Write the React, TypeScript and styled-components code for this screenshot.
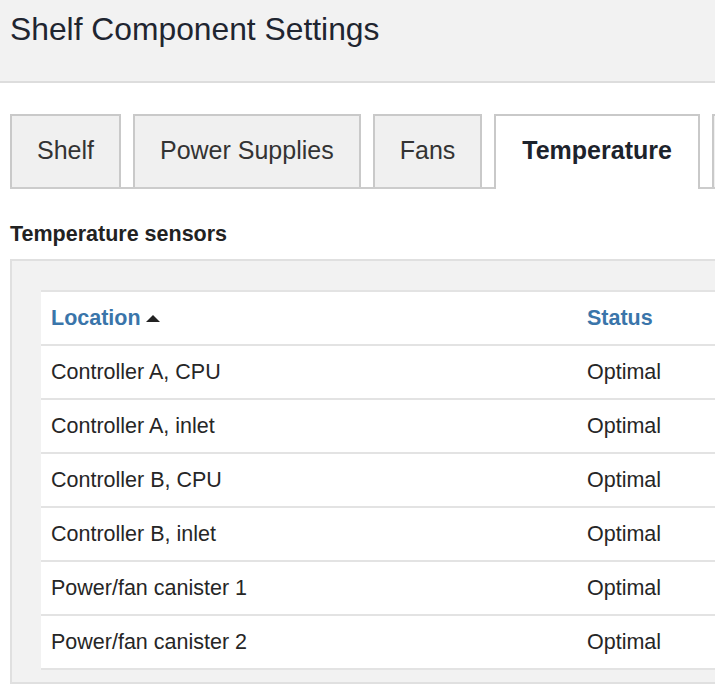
import React from "react";
import styled, { createGlobalStyle } from "styled-components";

const Global = createGlobalStyle`
  html, body {
    margin: 0;
    padding: 0;
    background: #ffffff;
    overflow: hidden;
  }
  body {
    font-family: "Liberation Sans", Arial, sans-serif;
    color: #222222;
  }
`;

const Page = styled.div`
  width: 715px;
  height: 689px;
  overflow: hidden;
`;

const Header = styled.header`
  height: 70px;
  padding: 11px 0 0 10px;
  background: #f2f2f2;
  border-bottom: 2px solid #dddddd;
`;

const Title = styled.h1`
  margin: 0;
  font-size: 31.8px;
  line-height: 36px;
  font-weight: normal;
  color: #1f2530;
  white-space: nowrap;
`;

const Body = styled.main`
  width: 920px;
  padding: 31px 0 0 10px;
`;

const TabList = styled.div`
  display: flex;
  gap: 12px;
  border-bottom: 2px solid #cccccc;
  height: 73px;
  white-space: nowrap;
`;

const Tab = styled.div<{ $active?: boolean }>`
  box-sizing: border-box;
  min-width: 60px;
  height: ${(p) => (p.$active ? "75px" : "73px")};
  padding: 0 ${(p) => (p.$active ? "26px" : "25px")};
  border: 2px solid #c9c9c9;
  border-bottom: none;
  background: ${(p) => (p.$active ? "#ffffff" : "#f0f0f0")};
  font-size: 25px;
  line-height: 69px;
  font-weight: ${(p) => (p.$active ? "bold" : "normal")};
  color: ${(p) => (p.$active ? "#1d232c" : "#333333")};
  flex: none;
`;

const SectionTitle = styled.h2`
  margin: 32px 0 12px 0;
  font-size: 21.5px;
  line-height: 26px;
  font-weight: bold;
  color: #222222;
`;

const Panel = styled.section`
  background: #f2f2f2;
  border: 2px solid #e0e0e0;
  border-right: none;
  padding: 29px 0 12px 29px;
`;

const Table = styled.div`
  background: #ffffff;
  border-top: 2px solid #e3e3e3;
`;

const Row = styled.div`
  display: grid;
  grid-template-columns: 536px 1fr;
  height: 52px;
  box-sizing: content-box;
  border-bottom: 2px solid #e3e3e3;
  align-items: center;
`;

const HeadCell = styled.div`
  padding-left: 10px;
  font-size: 21.5px;
  font-weight: bold;
  color: #3a75aa;
  display: flex;
  align-items: center;
  gap: 5px;
`;

const Cell = styled.div`
  padding-left: 10px;
  font-size: 21.5px;
  color: #262626;
  white-space: nowrap;
`;

const Caret = () => (
  <svg width="14" height="7" viewBox="0 0 14 7" aria-hidden="true">
    <polygon points="0,7 7,0 14,7" fill="#222222" />
  </svg>
);

const tabs = ["Shelf", "Power Supplies", "Fans", "Temperature"];
const sensors = [
  "Controller A, CPU",
  "Controller A, inlet",
  "Controller B, CPU",
  "Controller B, inlet",
  "Power/fan canister 1",
  "Power/fan canister 2",
];

export default function App() {
  return (
    <Page>
      <Global />
      <Header>
        <Title>Shelf Component Settings</Title>
      </Header>
      <Body>
        <TabList>
          {tabs.map((t) => (
            <Tab key={t} $active={t === "Temperature"}>
              {t}
            </Tab>
          ))}
          <Tab aria-label="More" />
        </TabList>
        <SectionTitle>Temperature sensors</SectionTitle>
        <Panel>
          <Table>
            <Row>
              <HeadCell>
                Location <Caret />
              </HeadCell>
              <HeadCell>Status</HeadCell>
            </Row>
            {sensors.map((s) => (
              <Row key={s}>
                <Cell>{s}</Cell>
                <Cell>Optimal</Cell>
              </Row>
            ))}
          </Table>
        </Panel>
      </Body>
    </Page>
  );
}
